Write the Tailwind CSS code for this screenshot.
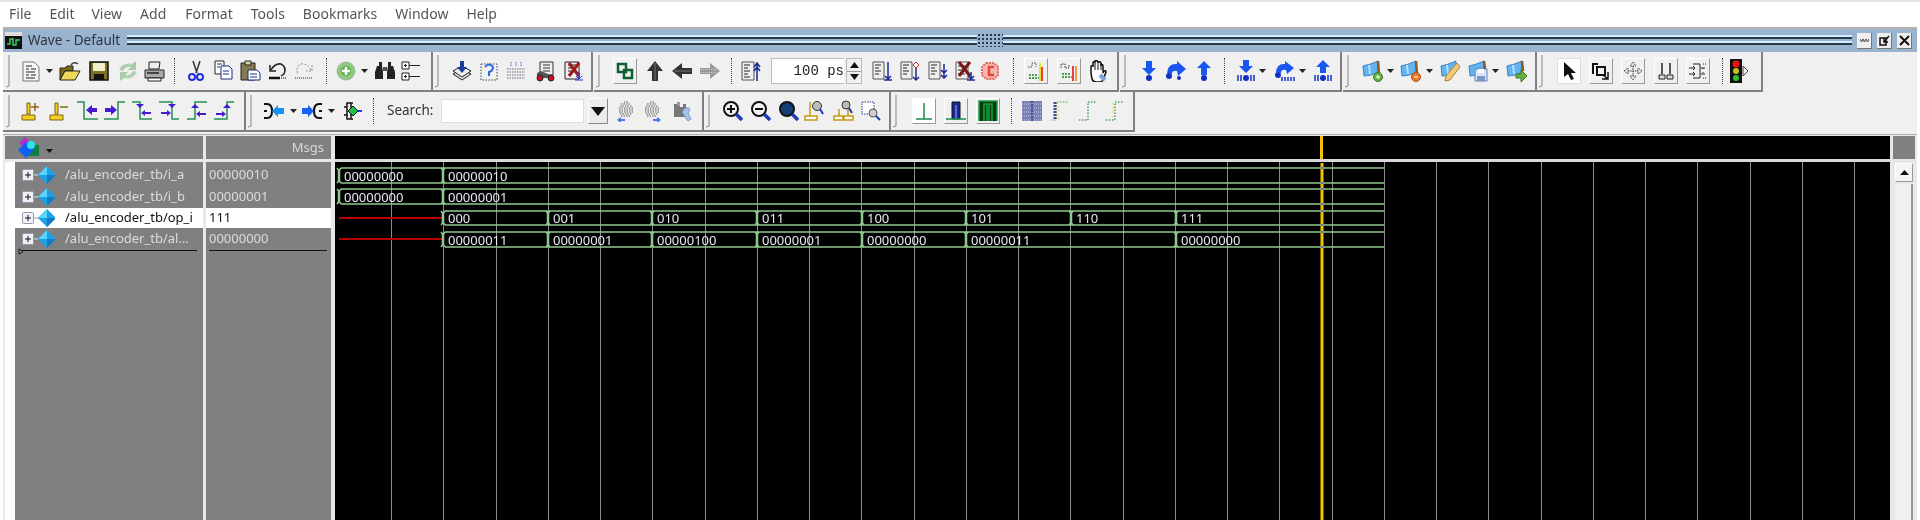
<!DOCTYPE html>
<html lang="en">
<head>
<meta charset="UTF-8">
<title>Wave - Default</title>
<script src="https://cdn.jsdelivr.net/npm/@tailwindcss/browser@4"></script>
</head>
<body class="bg-white">
<div class="w-[1920px] h-[520px] overflow-hidden flex flex-col font-['Noto_Sans',sans-serif] text-[#333] blur-[0.4px]">

  <!-- Menu bar -->
  <div class="h-[27px] shrink-0 flex items-center pl-[9px] pb-[3px] border-t-2 border-[#e4e4e4] text-[14px] text-[#555] bg-white">
    <span>File</span><span class="ml-[18px]">Edit</span><span class="ml-[17px]">View</span><span class="ml-[18px]">Add</span><span class="ml-[19px]">Format</span><span class="ml-[18px]">Tools</span><span class="ml-[18px]">Bookmarks</span><span class="ml-[18px]">Window</span><span class="ml-[18px]">Help</span>
  </div>

  <!-- Window -->
  <div class="flex-1 flex flex-col mx-[3px] border-t-2 border-[#b4b4b4] bg-[#f0f0f0] min-h-0">

    <!-- Title bar -->
    <div class="h-[23px] shrink-0 flex items-center bg-[#9ab4d0]">
      <svg width="17" height="17" viewBox="0 0 17 17" class="ml-[2px] shrink-0"><rect width="17" height="4" fill="#ddd"/><rect y="4" width="17" height="13" fill="#111"/><path d="M2 12h3V7h3v6h3V8h4" fill="none" stroke="#3ccf6a" stroke-width="1.5"/></svg>
      <span class="ml-[6px] w-[92px] text-[13.5px] leading-none text-[#2c3440] whitespace-nowrap">Wave - Default</span>
      <div class="relative ml-[7px] w-[1725px] h-[12px] flex flex-col">
        <div class="h-[2px] bg-[#d4eeff]"></div>
        <div class="h-[2px] bg-[#2b3a4a]"></div>
        <div class="h-[2px] mt-[2px] bg-[#d4eeff]"></div>
        <div class="h-[2px] bg-[#2b3a4a]"></div>
        <div class="absolute left-[850px] -top-[2px] w-[26px] h-[14px] bg-[#9ab4d0] bg-[radial-gradient(#2b3a4a_1px,transparent_1px)] bg-[length:4px_4px]"></div>
      </div>
      <span class="ml-[5px] w-[15px] h-[16px] flex items-center justify-center bg-[#eeeeee] border-r border-b border-[#777]"><svg width="9" height="3" viewBox="0 0 9 3"><path d="M0 0l1.5 3L3 0l1.5 3L6 0l1.5 3L9 0" fill="none" stroke="#444"/></svg></span>
      <span class="ml-[5px] w-[15px] h-[16px] flex items-center justify-center bg-[#eeeeee] border-r border-b border-[#777]"><svg width="11" height="11" viewBox="0 0 11 11"><path d="M1 3h6v7H1zM5 7l5-6M5 3v4h4" fill="none" stroke="#111" stroke-width="1.5"/></svg></span>
      <span class="ml-[5px] w-[15px] h-[16px] flex items-center justify-center bg-[#eeeeee] border-r border-b border-[#777]"><svg width="11" height="11" viewBox="0 0 11 11"><path d="M1 1l9 9M10 1l-9 9" stroke="#111" stroke-width="2"/></svg></span>
    </div>

    <!-- Toolbar row 1 -->
    <div class="h-[40px] shrink-0 flex">
      <div class="w-[430px] flex items-center border-r-2 border-b-2 border-[#808080]">
        <svg width="10" height="36" viewBox="0 0 10 36"><path d="M6 2v31l-3 1" fill="none" stroke="#888"/></svg>
        <svg width="22" height="22" viewBox="0 0 22 22" class="ml-[7px]"><path d="M3 2h11l5 5v14H3z" fill="#f6f6f6" stroke="#777"/><path d="M6 6h6M6 9h3M11 9h5M6 12h9M6 15h3M11 15h5M6 18h9" stroke="#222"/></svg>
        <svg width="7" height="4" viewBox="0 0 7 4" class="ml-[4px]"><path d="M0 0h7L3.5 4z" fill="#222"/></svg>
        <svg width="22" height="22" viewBox="0 0 22 22" class="ml-[6px]"><path d="M1 8h5l2-2h6v5H6L1 20z" fill="#7a6a10" stroke="#222"/><path d="M6 11h15l-5 9H1z" fill="#f2d858" stroke="#222"/><path d="M12 5q3-4 7-1" fill="none" stroke="#444" stroke-width="1.5"/></svg>
        <svg width="22" height="22" viewBox="0 0 22 22" class="ml-[7px]"><rect x="2" y="2" width="18" height="18" fill="#7d7020" stroke="#111" stroke-width="1.5"/><rect x="5" y="3" width="12" height="8" fill="#f2eec8"/><rect x="6" y="14" width="10" height="6" fill="#111"/></svg>
        <svg width="22" height="22" viewBox="0 0 22 22" class="ml-[7px]"><path d="M2 10q4-8 13-6l4-3v9h-8l3-3q-6-1-8 4zM20 12q-4 8-13 6l-4 3v-9h8l-3 3q6 1 8-4z" fill="#a8cba8"/><path d="M3 10q4-7 12-5M19 12q-4 7-12 5" fill="none" stroke="#e4f0e4" stroke-dasharray="1 1.5"/></svg>
        <svg width="22" height="22" viewBox="0 0 22 22" class="ml-[4px]"><path d="M6 2h11l-1 7H6z" fill="#eee" stroke="#222"/><path d="M2 10h19v8H2z" fill="#aaa" stroke="#222"/><path d="M5 18h13v3H5z" fill="#fff" stroke="#222"/><path d="M4 13h12" stroke="#222" stroke-width="1.5"/></svg>
        <span class="ml-[9px] w-px h-[26px] border-l border-dotted border-[#444]"></span>
        <svg width="22" height="22" viewBox="0 0 22 22" class="ml-[10px]"><path d="M8 1l4 12M15 1l-4 12" stroke="#333" stroke-width="1.5"/><circle cx="7" cy="17" r="3" fill="none" stroke="#2030d8" stroke-width="2"/><circle cx="15" cy="17" r="3" fill="none" stroke="#2030d8" stroke-width="2"/></svg>
        <svg width="22" height="22" viewBox="0 0 22 22" class="ml-[5px]"><path d="M3 1h9v13H3z" fill="#fff" stroke="#222"/><path d="M9 6h8l3 3v10H9z" fill="#fff" stroke="#1a2a80"/><path d="M5 4h5M5 7h3M11 11h6M11 14h6" stroke="#1a2a80"/></svg>
        <svg width="22" height="22" viewBox="0 0 22 22" class="ml-[5px]"><path d="M2 3h14v17H2z" fill="#857a50" stroke="#222"/><path d="M6 1h6v4H6z" fill="#d8d0a0" stroke="#222"/><path d="M9 10h9l3 3v7H9z" fill="#fff" stroke="#1a2a80"/><path d="M11 14h7M11 17h7" stroke="#1a2a80"/></svg>
        <svg width="22" height="22" viewBox="0 0 22 22" class="ml-[6px]"><path d="M3 5v6h6" fill="none" stroke="#222" stroke-width="1.5"/><path d="M4 10q4-7 10-6 6 3 3 10l-3 2" fill="none" stroke="#222" stroke-width="1.5"/><path d="M2 18h11" stroke="#111" stroke-width="2.5"/><path d="M14 18h6" stroke="#777" stroke-width="2" stroke-dasharray="1 1"/></svg>
        <svg width="22" height="22" viewBox="0 0 22 22" class="ml-[4px]"><path d="M19 5v6h-6M18 10q-4-7-10-6-6 3-3 10" fill="none" stroke="#888" stroke-dasharray="2 1.5"/><path d="M2 18h17" stroke="#888" stroke-width="2" stroke-dasharray="1 1"/></svg>
        <span class="ml-[11px] w-px h-[26px] border-l border-dotted border-[#444]"></span>
        <svg width="22" height="22" viewBox="0 0 22 22" class="ml-[8px]"><circle cx="11" cy="11" r="9" fill="#8ccb7c" stroke="#a0b8a0"/><circle cx="11" cy="11" r="5" fill="#5cae4c"/><path d="M11 7v8M7 11h8" stroke="#fff" stroke-width="2.5"/></svg>
        <svg width="7" height="4" viewBox="0 0 7 4" class="ml-[4px]"><path d="M0 0h7L3.5 4z" fill="#222"/></svg>
        <svg width="22" height="22" viewBox="0 0 22 22" class="ml-[6px]"><path d="M3 6h5l1 6v7H1v-7zM14 6h5l2 6v7h-8v-7z" fill="#222"/><path d="M9 7h4v4H9z" fill="#555"/><path d="M5 2h3v4H5zM14 2h3v4h-3z" fill="#222"/></svg>
        <svg width="22" height="22" viewBox="0 0 22 22" class="ml-[4px]"><path d="M2 2h7v7H2zM2 13h7v7H2z" fill="#fff" stroke="#222"/><path d="M4 5.5h3M5.5 4v3M4 16.5h3M5.500 15v3M9 5.5h11M9 16.5h11" stroke="#222"/></svg>
      </div>
      <div class="w-[160px] flex items-center border-r-2 border-b-2 border-[#808080]">
        <svg width="10" height="36" viewBox="0 0 10 36"><path d="M5 2v31l-3 1" fill="none" stroke="#888"/></svg>
        <svg width="22" height="22" viewBox="0 0 22 22" class="ml-[8px]"><path d="M11 9l9 5-9 6-9-6z" fill="#ddd" stroke="#222"/><path d="M11 6l9 5-9 6-9-6z" fill="#eee" stroke="#222"/><path d="M9 1h4v6h3l-5 6-5-6h3z" fill="#1a3c9c"/></svg>
        <svg width="22" height="22" viewBox="0 0 22 22" class="ml-[5px]"><path d="M3 4h16v16H3z" fill="none" stroke="#345" stroke-dasharray="1.5 1.5"/><path d="M7 7q4-5 8 0 0 4-4 5v4" fill="none" stroke="#2a6ad8" stroke-width="2"/></svg>
        <svg width="22" height="22" viewBox="0 0 22 22" class="ml-[5px]"><path d="M2 9h18M2 12h18M2 15h18M2 18h18" stroke="#667" stroke-dasharray="1.5 1"/><path d="M6 2v5M11 2v5M16 2v5" stroke="#2a6ad8" stroke-dasharray="1.5 1"/></svg>
        <svg width="22" height="22" viewBox="0 0 22 22" class="ml-[7px]"><path d="M6 2h13v13H6z" fill="#eee" stroke="#333"/><path d="M9 5h7M9 8h7M9 11h7" stroke="#333"/><path d="M3 13l4-2 9 4v3H3z" fill="#555"/><circle cx="6" cy="18" r="3" fill="#c81020" stroke="#222"/><circle cx="17" cy="18" r="3" fill="#c81020" stroke="#222"/></svg>
        <svg width="22" height="22" viewBox="0 0 22 22" class="ml-[6px]"><path d="M3 2h14v17H3z" fill="#eee" stroke="#222"/><path d="M6 5h8M6 8h8M6 11h8" stroke="#222"/><path d="M7 3l10 13M17 3L7 16" stroke="#a01818" stroke-width="3"/><path d="M17 12v7M14 16l3 3 3-3M13 20h8" fill="none" stroke="#2030d8"/></svg>
      </div>
      <div class="w-[525px] ml-[1px] flex items-center border-r-2 border-b-2 border-[#808080]">
        <svg width="10" height="36" viewBox="0 0 10 36"><path d="M5 2v31l-3 1" fill="none" stroke="#888"/></svg>
        <span class="ml-[9px] w-[24px] h-[26px] flex items-center justify-center bg-[#f0f0f0] border border-white border-r-[#999] border-b-[#999]"><svg width="18" height="18" viewBox="0 0 18 18"><path d="M2 2h8v8H2zM8 8h8v8H8z" fill="none" stroke="#0c6030" stroke-width="2.5"/></svg></span>
        <svg width="22" height="22" viewBox="0 0 22 22" class="ml-[7px]"><path d="M11 1l8 10h-5v10H8V11H3z" fill="#333"/><path d="M11 3v17" stroke="#777"/></svg>
        <svg width="22" height="22" viewBox="0 0 22 22" class="ml-[5px]"><path d="M1 11l10-8v5h10v6H11v5z" fill="#333"/><path d="M3 11h17" stroke="#777"/></svg>
        <svg width="22" height="22" viewBox="0 0 22 22" class="ml-[6px]"><path d="M21 11l-10-8v5H1v6h10v5z" fill="#999"/><path d="M2 9.5h16M2 12.5h16" stroke="#ccc" stroke-dasharray="1 1"/></svg>
        <span class="ml-[10px] w-px h-[26px] border-l border-dotted border-[#444]"></span>
        <svg width="22" height="22" viewBox="0 0 22 22" class="ml-[8px]"><path d="M2 2h12v18H2z" fill="#eee" stroke="#555"/><path d="M4 5h6M4 8h4M4 11h6M4 14h4M4 17h6" stroke="#222"/><path d="M17 4v17M14 7l3-4 3 4M14 11l3-4 3 4" fill="none" stroke="#1a2a90" stroke-width="1.5"/></svg>
        <span class="ml-[9px] w-[73px] h-[26px] flex items-center justify-end bg-white border border-[#bbb] border-r-0 font-['Liberation_Mono',monospace] text-[14px] text-[#222] whitespace-pre">100 ps</span>
        <span class="ml-[2px] w-[16px] h-[26px] flex flex-col border border-[#bbb]"><span class="flex-1 flex items-center justify-center"><svg width="9" height="6" viewBox="0 0 9 6"><path d="M0 6h9L4.500 0z" fill="#111"/></svg></span><span class="flex-1 flex items-center justify-center border-t border-[#999]"><svg width="9" height="6" viewBox="0 0 9 6"><path d="M0 0h9L4.500 6z" fill="#111"/></svg></span></span>
        <svg width="22" height="22" viewBox="0 0 22 22" class="ml-[9px]"><path d="M2 2h11v17H2z" fill="#eee" stroke="#555"/><path d="M4 5h6M4 8h4M4 11h6M4 14h4" stroke="#222"/><path d="M17 2v17M14 16l3 3 3-3M13 20h8" fill="none" stroke="#1a2a90" stroke-width="1.5"/></svg>
        <svg width="22" height="22" viewBox="0 0 22 22" class="ml-[6px]"><path d="M2 2h11v17H2z" fill="#eee" stroke="#555"/><path d="M4 5h6M4 8h4M4 11h6M4 14h4" stroke="#222"/><path d="M17 2l3 3-3 3-3-3z" fill="#fff" stroke="#d02020"/><path d="M17 8v12M14 17l3 3 3-3" fill="none" stroke="#1a2a90" stroke-width="1.5"/></svg>
        <svg width="22" height="22" viewBox="0 0 22 22" class="ml-[6px]"><path d="M2 2h11v17H2z" fill="#eee" stroke="#555"/><path d="M4 5h6M4 8h4M4 11h6M4 14h4" stroke="#222"/><path d="M17 4v14M14 10l3 3 3-3M14 15l3 3 3-3" fill="none" stroke="#1a2a90" stroke-width="1.5"/></svg>
        <svg width="22" height="22" viewBox="0 0 22 22" class="ml-[5px]"><path d="M2 2h12v17H2z" fill="#eee" stroke="#555"/><path d="M4 6h7M4 10h7M4 14h7" stroke="#222"/><path d="M5 2l11 14M16 2L5 16" stroke="#7a1818" stroke-width="3"/><path d="M17 12v7M14 16l3 3 3-3M13 20h8" fill="none" stroke="#1a2a90" stroke-width="1.5"/></svg>
        <svg width="22" height="22" viewBox="0 0 22 22" class="ml-[3px]"><path d="M7 3h8l4 4v8l-4 4H7l-4-4V7z" fill="#f4b8b0" stroke="#e86a60" stroke-width="2" stroke-dasharray="2 1"/><path d="M15 7h-5v8h5" fill="none" stroke="#e0483c" stroke-width="2.5"/></svg>
        <span class="ml-[12px] w-px h-[26px] border-l border-dotted border-[#444]"></span>
        <span class="ml-[10px] w-[24px] h-[26px] flex items-center justify-center bg-[#f0f0f0] border border-white border-r-[#999] border-b-[#999]"><svg width="20" height="20" viewBox="0 0 20 20"><path d="M2 6h4V2h4v4" fill="none" stroke="#555" stroke-dasharray="1.5 1"/><path d="M14 2v18" stroke="#e8e020" stroke-width="2"/><path d="M16 6v14" stroke="#e84040" stroke-width="2"/><path d="M3 17h10M3 14h9" stroke="#50a050" stroke-width="2" stroke-dasharray="2 1"/></svg></span>
        <span class="ml-[9px] w-[24px] h-[26px] flex items-center justify-center bg-[#f0f0f0] border border-white border-r-[#999] border-b-[#999]"><svg width="20" height="20" viewBox="0 0 20 20"><path d="M2 7V3h4v4h4V3" fill="none" stroke="#333" stroke-dasharray="1.5 1"/><path d="M14 5v15" stroke="#e84040" stroke-width="2"/><path d="M17 5v15" stroke="#e8a040" stroke-width="2"/><path d="M3 16h10M3 13h9" stroke="#50a050" stroke-width="2" stroke-dasharray="2 1"/></svg></span>
        <svg width="22" height="22" viewBox="0 0 22 22" class="ml-[6px]"><path d="M4 13V7q0-2 2-1V3q0-2 2-1l0-1q2-1 3 1 2-1 3 1v2q2-1 2 1v7l1-2q2-1 2 1l-3 8q-1 2-4 2H9q-3 0-4-3z" fill="#fff" stroke="#111" stroke-width="1.5"/><path d="M8 3v7M11 2v8M14 3v7" stroke="#111"/><path d="M13 15l5 5" stroke="#7ba0d8" stroke-width="4"/></svg>
      </div>
      <div class="w-[222px] ml-[1px] flex items-center border-r-2 border-b-2 border-[#808080]">
        <svg width="10" height="36" viewBox="0 0 10 36"><path d="M5 2v31l-3 1" fill="none" stroke="#888"/></svg>
        <svg width="22" height="22" viewBox="0 0 22 22" class="ml-[8px]"><path d="M8 1h6v7h4l-7 7-7-7h4z" fill="#1858f0"/><circle cx="11" cy="18" r="3" fill="#1030c0"/></svg>
        <svg width="22" height="22" viewBox="0 0 22 22" class="ml-[5px]"><path d="M2 13q1-10 10-9V1l9 8-8 7-1-5q-5-1-5 3z" fill="#1858f0"/><circle cx="4" cy="16" r="3" fill="#1030c0"/><circle cx="14" cy="18" r="2" fill="#1030c0"/></svg>
        <svg width="22" height="22" viewBox="0 0 22 22" class="ml-[6px]"><path d="M11 1l7 7h-4v7H8V8H4z" fill="#1858f0"/><circle cx="11" cy="18" r="3" fill="#1030c0"/></svg>
        <span class="ml-[9px] w-px h-[26px] border-l border-dotted border-[#444]"></span>
        <svg width="22" height="22" viewBox="0 0 22 22" class="ml-[10px]"><path d="M8 0h6v6h4l-7 7-7-7h4z" fill="#1858f0"/><path d="M3 15v6M6 15v6M16 15v6M19 15v6" stroke="#1030c0" stroke-width="1.5"/><circle cx="11" cy="18" r="3" fill="#1030c0"/></svg>
        <svg width="7" height="4" viewBox="0 0 7 4" class="ml-[2px]"><path d="M0 0h7L3.5 4z" fill="#222"/></svg>
        <svg width="22" height="22" viewBox="0 0 22 22" class="ml-[8px]"><path d="M2 12q1-9 9-8V1l9 7-7 6-1-4q-5-1-5 3z" fill="#1858f0"/><circle cx="4" cy="15" r="3" fill="#1030c0"/><path d="M8 17v4M11 17v4M14 17v4M17 17v4M20 17v4" stroke="#1030c0" stroke-width="1.5"/></svg>
        <svg width="7" height="4" viewBox="0 0 7 4" class="ml-[3px]"><path d="M0 0h7L3.5 4z" fill="#222"/></svg>
        <svg width="22" height="22" viewBox="0 0 22 22" class="ml-[6px]"><path d="M11 0l7 7h-4v6H8V7H4z" fill="#1858f0"/><path d="M3 15v6M6 15v6M16 15v6M19 15v6" stroke="#1030c0" stroke-width="1.5"/><circle cx="11" cy="18" r="3" fill="#1030c0"/></svg>
      </div>
      <div class="w-[194px] ml-[1px] flex items-center border-r-2 border-b-2 border-[#808080]">
        <svg width="10" height="36" viewBox="0 0 10 36"><path d="M5 2v31l-3 1" fill="none" stroke="#888"/></svg>
        <svg width="22" height="22" viewBox="0 0 22 22" class="ml-[9px]"><path d="M1 6q6-1 15-5l-1 12q-7 3-13 3z" fill="#62b4ee" stroke="#3a82c8"/><path d="M7 5l1 9" stroke="#b8e0ff" stroke-width="2"/><path d="M16 1l1 13" stroke="#8a5a20" stroke-width="2.5"/><circle cx="16" cy="17" r="4.5" fill="#68b040" stroke="#3a7a20"/><path d="M16 15v4M14 17h4" stroke="#fff"/></svg>
        <svg width="7" height="4" viewBox="0 0 7 4" class="ml-[3px]"><path d="M0 0h7L3.5 4z" fill="#222"/></svg>
        <svg width="22" height="22" viewBox="0 0 22 22" class="ml-[6px]"><path d="M1 6q6-1 15-5l-1 12q-7 3-13 3z" fill="#62b4ee" stroke="#3a82c8"/><path d="M7 5l1 9" stroke="#b8e0ff" stroke-width="2"/><path d="M16 1l1 13" stroke="#8a5a20" stroke-width="2.5"/><circle cx="16" cy="17" r="4.5" fill="#e87a30" stroke="#b05010"/><path d="M14 17h4" stroke="#fff"/></svg>
        <svg width="7" height="4" viewBox="0 0 7 4" class="ml-[4px]"><path d="M0 0h7L3.5 4z" fill="#222"/></svg>
        <svg width="22" height="22" viewBox="0 0 22 22" class="ml-[7px]"><path d="M1 6q6-1 15-5l-1 12q-7 3-13 3z" fill="#62b4ee" stroke="#3a82c8"/><path d="M7 5l1 9" stroke="#b8e0ff" stroke-width="2"/><path d="M17 3l3 4-10 13-5 1 1-5z" fill="#f0c878" stroke="#b08030"/></svg>
        <svg width="22" height="22" viewBox="0 0 22 22" class="ml-[6px]"><path d="M1 6q6-1 15-5l-1 12q-7 3-13 3z" fill="#62b4ee" stroke="#3a82c8"/><path d="M16 1l1 8" stroke="#8a5a20" stroke-width="2.5"/><path d="M7 9h12v12H7z" fill="#d8e4f8" stroke="#6080b8"/><path d="M10 9h6v4h-6z" fill="#fff"/><path d="M9 16h8v5H9z" fill="#7a98c8"/></svg>
        <svg width="7" height="4" viewBox="0 0 7 4" class="ml-[2px]"><path d="M0 0h7L3.5 4z" fill="#222"/></svg>
        <svg width="22" height="22" viewBox="0 0 22 22" class="ml-[7px]"><path d="M1 6q6-1 15-5l-1 12q-7 3-13 3z" fill="#62b4ee" stroke="#3a82c8"/><path d="M7 5l1 9" stroke="#b8e0ff" stroke-width="2"/><path d="M16 1l1 10" stroke="#8a5a20" stroke-width="2.5"/><path d="M10 14h5v-4l6 6-6 6v-4h-5z" fill="#68b040" stroke="#3a7a20"/></svg>
      </div>
      <div class="w-[226px] flex items-center border-r-2 border-b-2 border-[#808080]">
        <svg width="10" height="36" viewBox="0 0 10 36"><path d="M5 2v31l-3 1" fill="none" stroke="#888"/></svg>
        <span class="ml-[10px] w-[24px] h-[26px] flex items-center justify-center bg-white border border-[#ddd]"><svg width="16" height="20" viewBox="0 0 16 20"><path d="M3 1v15l4-3 3 6 3-1-3-6h5z" fill="#111"/></svg></span>
        <span class="ml-[8px] w-[24px] h-[26px] flex items-center justify-center bg-[#f0f0f0] border border-white border-r-[#999] border-b-[#999]"><svg width="18" height="18" viewBox="0 0 18 18"><path d="M6 2H1v10M5 5h8v8H5z" fill="none" stroke="#111" stroke-width="2"/><path d="M11 13l5 4M16 10v7h-6" fill="none" stroke="#111" stroke-width="1.5"/></svg></span>
        <span class="ml-[8px] w-[24px] h-[26px] flex items-center justify-center bg-[#f0f0f0] border border-white border-r-[#999] border-b-[#999]"><svg width="20" height="20" viewBox="0 0 20 20"><path d="M10 1l3 4H7zM10 19l3-4H7zM1 10l4-3v6zM19 10l-4-3v6zM10 5v10M5 10h10" fill="#eee" stroke="#444" stroke-dasharray="1.5 .8"/></svg></span>
        <span class="ml-[9px] w-[24px] h-[26px] flex items-center justify-center bg-[#f0f0f0] border border-white border-r-[#999] border-b-[#999]"><svg width="18" height="20" viewBox="0 0 18 20"><path d="M5 2v11M13 2v11" stroke="#222" stroke-width="1.5"/><path d="M2 14h6v4H2zM10 14h6v4h-6z" fill="#ddd" stroke="#222"/></svg></span>
        <span class="ml-[8px] w-[24px] h-[26px] flex items-center justify-center bg-[#f0f0f0] border border-white border-r-[#999] border-b-[#999]"><svg width="20" height="20" viewBox="0 0 20 20"><path d="M5 3h7v14H5" fill="none" stroke="#222"/><path d="M15 3h4M15 17h4M15 7v1M15 11v1" stroke="#222" stroke-dasharray="1 1"/><path d="M1 7h6M5 5l2 2-2 2M1 13h6M5 11l2 2-2 2M13 7h4M13 13h4" fill="none" stroke="#222"/></svg></span>
        <span class="ml-[12px] w-px h-[26px] border-l border-dotted border-[#444]"></span>
        <svg width="22" height="24" viewBox="0 0 22 24" class="ml-[5px]"><rect x="2" y="0" width="12" height="24" fill="#111"/><circle cx="8" cy="5" r="3.500" fill="#f01010"/><circle cx="8" cy="12" r="3" fill="#c8c020"/><circle cx="8" cy="19" r="3" fill="#30c030"/><path d="M15 7l5 5-5 5z" fill="#f0f0f0" stroke="#444"/></svg>
      </div>
    </div>

    <!-- Toolbar row 2 -->
    <div class="h-[40px] shrink-0 flex">
      <div class="w-[243px] flex items-center border-r-2 border-b-2 border-[#808080]">
        <svg width="10" height="36" viewBox="0 0 10 36"><path d="M6 2v31l-3 1" fill="none" stroke="#888"/></svg>
        <svg width="22" height="22" viewBox="0 0 22 22" class="ml-[7px]"><path d="M7 3h3v11H7zM2 15h13v5H2z" fill="#f6cf24" stroke="#7a6410"/><path d="M15 3v8M11 7h8" stroke="#8a6a10" stroke-width="1.5"/></svg>
        <svg width="22" height="22" viewBox="0 0 22 22" class="ml-[6px]"><path d="M7 3h3v11H7zM2 15h13v5H2z" fill="#f6cf24" stroke="#7a6410"/><path d="M12 7h8" stroke="#8a6a10" stroke-width="1.5"/></svg>
        <svg width="22" height="22" viewBox="0 0 22 22" class="ml-[7px]"><path d="M0 2h7v17h14" fill="none" stroke="#249050" stroke-width="1.5"/><path d="M9 10l6-5v3h5v4h-5v3z" fill="#4a18d0"/></svg>
        <svg width="22" height="22" viewBox="0 0 22 22" class="ml-[4px]"><path d="M1 19h14V2h7" fill="none" stroke="#249050" stroke-width="1.5"/><path d="M14 10L8 5v3H2v4h6v3z" fill="#4a18d0"/></svg>
        <svg width="22" height="22" viewBox="0 0 22 22" class="ml-[6px]"><path d="M1 2h8v17h12" fill="none" stroke="#249050" stroke-width="1.5"/><path d="M5 4h8l-4 4zM10 13l4-3v2h6v2h-6v2z" fill="#4a18d0"/></svg>
        <svg width="22" height="22" viewBox="0 0 22 22" class="ml-[5px]"><path d="M1 2h13v17h7" fill="none" stroke="#249050" stroke-width="1.5"/><path d="M10 4h8l-4 4zM13 13l-4-3v2H3v2h6v2z" fill="#4a18d0"/></svg>
        <svg width="22" height="22" viewBox="0 0 22 22" class="ml-[6px]"><path d="M1 19h8V2h12" fill="none" stroke="#249050" stroke-width="1.5"/><path d="M5 8h8L9 4zM10 14l4-3v2h6v2h-6v2z" fill="#4a18d0"/></svg>
        <svg width="22" height="22" viewBox="0 0 22 22" class="ml-[5px]"><path d="M1 19h13V2h7" fill="none" stroke="#249050" stroke-width="1.5"/><path d="M10 8h8l-4-4zM13 14l-4-3v2H3v2h6v2z" fill="#4a18d0"/></svg>
      </div>
      <div class="w-[458px] flex items-center border-r-2 border-b-2 border-[#808080]">
        <svg width="10" height="36" viewBox="0 0 10 36"><path d="M5 2v31l-3 1" fill="none" stroke="#888"/></svg>
        <svg width="22" height="22" viewBox="0 0 22 22" class="ml-[7px]"><path d="M1 4h3q5 0 5 7t-5 7H1M4 11H1" fill="none" stroke="#111" stroke-width="2"/><path d="M9 11l6-6v3h6v6h-6v3z" fill="#1890f8"/></svg>
        <svg width="7" height="4" viewBox="0 0 7 4" class="ml-[5px]"><path d="M0 0h7L3.5 4z" fill="#222"/></svg>
        <svg width="22" height="22" viewBox="0 0 22 22" class="ml-[4px]"><path d="M21 4h-3q-5 0-5 7t5 7h3M18 11h3" fill="none" stroke="#111" stroke-width="2"/><path d="M13 11L7 5v3H1v6h6v3z" fill="#1860f8"/></svg>
        <svg width="7" height="4" viewBox="0 0 7 4" class="ml-[5px]"><path d="M0 0h7L3.5 4z" fill="#222"/></svg>
        <svg width="22" height="22" viewBox="0 0 22 22" class="ml-[7px]"><path d="M6 3h5M6 19h5M2 7h3M2 15h3M5 3h4v16H5z" fill="none" stroke="#111" stroke-width="1.5"/><path d="M11 6l5 5-5 5-5-5z" fill="#20c040" stroke="#111"/><path d="M16 11h4" stroke="#1840e0" stroke-width="2"/></svg>
        <span class="ml-[9px] w-px h-[26px] border-l border-dotted border-[#444]"></span>
        <span class="ml-[13px] w-[45px] text-[13.5px] leading-none text-[#333] whitespace-nowrap">Search:</span>
        <span class="ml-[9px] w-[143px] h-[24px] bg-white border border-[#ddd]"></span>
        <span class="ml-[4px] w-[20px] h-[26px] flex items-center justify-center bg-[#ececec] border border-white border-r-[#888] border-b-[#888]"><svg width="14" height="9" viewBox="0 0 14 9"><path d="M0 0h14L7 9z" fill="#111"/></svg></span>
        <svg width="22" height="22" viewBox="0 0 22 22" class="ml-[7px]"><path d="M9 2h4M6 4h10M5 6h12M4 8h14M4 10h14M4 12h14M5 14h12M6 16h10" stroke="#8a8a8a" stroke-width="1.5" stroke-dasharray="1.500 1"/><path d="M2 20l4-3v2h4v2H6v2z" fill="#4a78e8"/></svg>
        <svg width="22" height="22" viewBox="0 0 22 22" class="ml-[4px]"><path d="M9 2h4M6 4h10M5 6h12M4 8h14M4 10h14M4 12h14M5 14h12M6 16h10" stroke="#8a8a8a" stroke-width="1.5" stroke-dasharray="1.500 1"/><path d="M20 20l-4-3v2h-4v2h4v2z" fill="#4a78e8"/></svg>
        <svg width="22" height="22" viewBox="0 0 22 22" class="ml-[7px]"><path d="M4 4h6v3h3V4h3v13H4z" fill="#777"/><path d="M7 2h3v4H7z" fill="#999"/><path d="M14 9q5-3 6 1l-2 3 3 6-3 2-4-6q-3-3 0-6z" fill="#a8c4ea" stroke="#7a98c8"/></svg>
      </div>
      <div class="w-[187px] flex items-center border-r-2 border-b-2 border-[#808080]">
        <svg width="10" height="36" viewBox="0 0 10 36"><path d="M5 2v31l-3 1" fill="none" stroke="#888"/></svg>
        <svg width="22" height="22" viewBox="0 0 22 22" class="ml-[8px]"><circle cx="9" cy="9" r="7" fill="#f4f4f4" stroke="#111" stroke-width="2"/><path d="M9 5v8M5 9h8" stroke="#111" stroke-width="2"/><path d="M14 14l6 6" stroke="#1a3cb0" stroke-width="3.5"/></svg>
        <svg width="22" height="22" viewBox="0 0 22 22" class="ml-[6px]"><circle cx="9" cy="9" r="7" fill="#f4f4f4" stroke="#111" stroke-width="2"/><path d="M5 9h8" stroke="#111" stroke-width="2"/><path d="M14 14l6 6" stroke="#1a3cb0" stroke-width="3.5"/></svg>
        <svg width="22" height="22" viewBox="0 0 22 22" class="ml-[6px]"><circle cx="9" cy="9" r="7" fill="#143e78" stroke="#111" stroke-width="2"/><path d="M14 14l6 6" stroke="#1a3cb0" stroke-width="3.5"/></svg>
        <svg width="22" height="22" viewBox="0 0 22 22" class="ml-[4px]"><path d="M6 2v14" stroke="#c89810" stroke-width="1.5"/><path d="M1 16h12v4H1z" fill="#fff" stroke="#c89810" stroke-width="1.5"/><circle cx="13" cy="6" r="4.5" fill="#bbb" stroke="#333"/><path d="M16 9l3 5" stroke="#1a3cb0" stroke-width="2"/></svg>
        <svg width="22" height="22" viewBox="0 0 22 22" class="ml-[7px]"><path d="M6 9v7M15 9v7" stroke="#c89810" stroke-width="1.5"/><path d="M1 16h9v4H1zM11 16h9v4h-9z" fill="#fff" stroke="#c89810" stroke-width="1.5"/><circle cx="13" cy="5" r="4" fill="#bbb" stroke="#333"/><path d="M16 8l3 5" stroke="#1a3cb0" stroke-width="2"/></svg>
        <svg width="22" height="22" viewBox="0 0 22 22" class="ml-[5px]"><path d="M2 2h12v12H2z" fill="#fff" stroke="#2a3a90" stroke-dasharray="1.5 1"/><circle cx="13" cy="13" r="4" fill="#ccc" stroke="#555"/><path d="M16 16l4 4" stroke="#1a3cb0" stroke-width="2"/></svg>
      </div>
      <div class="w-[244px] flex items-center border-r-2 border-b-2 border-[#808080]">
        <svg width="10" height="36" viewBox="0 0 10 36"><path d="M5 2v31l-3 1" fill="none" stroke="#888"/></svg>
        <span class="ml-[11px] w-[24px] h-[26px] flex items-center justify-center bg-white border border-white border-r-[#999] border-b-[#999]"><svg width="20" height="22" viewBox="0 0 20 22"><path d="M10 3v16M2 19h16" stroke="#18904a" stroke-width="1.5"/></svg></span>
        <span class="ml-[8px] w-[24px] h-[26px] flex items-center justify-center bg-[#f0f0f0] border border-white border-r-[#999] border-b-[#999]"><svg width="20" height="22" viewBox="0 0 20 22"><path d="M6 2h8v17H6z" fill="#1a2a90" stroke="#111"/><path d="M9 5h2v14H9z" fill="#5a6ad0"/><path d="M0 19h20" stroke="#18904a" stroke-width="1.5"/></svg></span>
        <span class="ml-[8px] w-[24px] h-[26px] flex items-center justify-center bg-[#f0f0f0] border border-white border-r-[#999] border-b-[#999]"><svg width="20" height="22" viewBox="0 0 20 22"><path d="M1 1h18v20H1z" fill="#063c10"/><path d="M1 21V1h18v20M6 21V4h3v17M11 21V4h3v17" fill="none" stroke="#18a040" stroke-width="1.5"/></svg></span>
        <span class="ml-[11px] w-px h-[26px] border-l border-dotted border-[#444]"></span>
        <svg width="22" height="22" viewBox="0 0 22 22" class="ml-[9px]"><rect x="1" y="1" width="20" height="20" fill="#7a80b8"/><path d="M1 4h20M1 8h20M1 12h20M1 16h20M1 20h20" stroke="#c8cce4" stroke-dasharray="1 1"/><path d="M11 1v20" stroke="#3a5098" stroke-width="2" stroke-dasharray="2 1"/></svg>
        <svg width="22" height="22" viewBox="0 0 22 22" class="ml-[6px]"><path d="M2 20h5V2h12" fill="none" stroke="#50a060" stroke-dasharray="1.5 1.5"/><path d="M6 2v18" stroke="#3a4a98" stroke-width="3" stroke-dasharray="2 1"/><path d="M9 2v18" stroke="#e0d830" stroke-dasharray="2 2"/></svg>
        <svg width="22" height="22" viewBox="0 0 22 22" class="ml-[6px]"><path d="M2 20h9V2h9" fill="none" stroke="#50a060" stroke-width="1.5" stroke-dasharray="1.5 1.5"/></svg>
        <svg width="22" height="22" viewBox="0 0 22 22" class="ml-[5px]"><path d="M2 20h9V2h9" fill="none" stroke="#50a060" stroke-width="1.5" stroke-dasharray="1.5 1.5"/><path d="M9 3v16" stroke="#e0d830" stroke-dasharray="2 2"/></svg>
      </div>
    </div>

    <div class="h-[3px] shrink-0 border-b border-[#b0b0b0]"></div>

    <!-- Wave panel -->
    <div class="flex-1 flex min-h-0 pl-[2px] pr-[2px] pt-[1px] bg-[#e8e8e8] text-[13px]">

      <!-- Signal names -->
      <div class="w-[198px] flex flex-col">
        <div class="h-[23px] shrink-0 bg-[#808080] flex items-center pl-[12px]">
          <svg width="24" height="21" viewBox="0 0 24 21"><path d="M2 6l6-6 6 6-6 6z" fill="#b030c8"/><rect x="11" y="8" width="11" height="11" fill="#108040"/><path d="M9 5l8 8-8 8-8-8z" fill="#1060f0"/><circle cx="14" cy="8" r="4" fill="#30e0f0"/></svg>
          <svg width="7" height="4" viewBox="0 0 7 4" class="ml-[5px] mt-[6px]"><path d="M0 0h7L3.5 4z" fill="#111"/></svg>
        </div>
        <div class="flex-1 mt-[3px] flex bg-white">
          <div class="w-[10px] shrink-0"></div>
          <div class="flex-1 bg-[#808080] pt-[2px] text-[#dcdcdc] relative">
            <div class="h-[22px] flex items-center pl-[7px]">
              <svg width="33" height="20" viewBox="0 0 33 20" class="shrink-0"><rect x="0.5" y="4.5" width="11" height="11" rx="1" fill="#eef0f8" stroke="#99a"/><path d="M3 10h6M6 7v6" stroke="#111"/><path d="M12 10h6" stroke="#ddd"/><path d="M25 1l9 9-9 9-9-9z" fill="#1fa0e4"/><path d="M25 1l-9 9h9z" fill="#58d4ff"/><path d="M25 19l9-9h-9z" fill="#157ac4"/></svg>
              <span class="ml-[10px] whitespace-nowrap">/alu_encoder_tb/i_a</span>
            </div>
            <div class="h-[22px] flex items-center pl-[7px]">
              <svg width="33" height="20" viewBox="0 0 33 20" class="shrink-0"><rect x="0.5" y="4.5" width="11" height="11" rx="1" fill="#eef0f8" stroke="#99a"/><path d="M3 10h6M6 7v6" stroke="#111"/><path d="M12 10h6" stroke="#ddd"/><path d="M25 1l9 9-9 9-9-9z" fill="#1fa0e4"/><path d="M25 1l-9 9h9z" fill="#58d4ff"/><path d="M25 19l9-9h-9z" fill="#157ac4"/></svg>
              <span class="ml-[10px] whitespace-nowrap">/alu_encoder_tb/i_b</span>
            </div>
            <div class="h-[20px] flex items-center pl-[7px] bg-white text-[#111]">
              <svg width="33" height="20" viewBox="0 0 33 20" class="shrink-0"><rect x="0.5" y="4.5" width="11" height="11" rx="1" fill="#eef0f8" stroke="#99a"/><path d="M3 10h6M6 7v6" stroke="#111"/><path d="M12 10h6" stroke="#999"/><path d="M25 1l9 9-9 9-9-9z" fill="#1fa0e4"/><path d="M25 1l-9 9h9z" fill="#58d4ff"/><path d="M25 19l9-9h-9z" fill="#157ac4"/></svg>
              <span class="ml-[10px] whitespace-nowrap">/alu_encoder_tb/op_i</span>
            </div>
            <div class="h-[21px] flex items-center pl-[7px]">
              <svg width="33" height="20" viewBox="0 0 33 20" class="shrink-0"><rect x="0.5" y="4.5" width="11" height="11" rx="1" fill="#eef0f8" stroke="#99a"/><path d="M3 10h6M6 7v6" stroke="#111"/><path d="M12 10h6" stroke="#ddd"/><path d="M25 1l9 9-9 9-9-9z" fill="#1fa0e4"/><path d="M25 1l-9 9h9z" fill="#58d4ff"/><path d="M25 19l9-9h-9z" fill="#157ac4"/></svg>
              <span class="ml-[10px] whitespace-nowrap">/alu_encoder_tb/al...</span>
            </div>
            <div class="h-px mt-[1px] ml-[5px] mr-[6px] bg-[#111]"></div>
            <svg width="6" height="7" viewBox="0 0 6 7" class="absolute left-[3px] top-[86px]"><path d="M1 1l4 2.5L1 6z" fill="#999" stroke="#111"/></svg>
          </div>
        </div>
      </div>

      <!-- Values -->
      <div class="w-[125px] ml-[3px] flex flex-col">
        <div class="h-[23px] shrink-0 bg-[#808080] flex items-center justify-end pr-[7px] text-[#d8d8d8]">Msgs</div>
        <div class="flex-1 mt-[3px] bg-[#808080] pt-[2px] text-[#dcdcdc]">
          <div class="h-[22px] flex items-center pl-[3px]">00000010</div>
          <div class="h-[22px] flex items-center pl-[3px]">00000001</div>
          <div class="h-[20px] flex items-center pl-[3px] bg-white text-[#111]">111</div>
          <div class="h-[21px] flex items-center pl-[3px]">00000000</div>
          <div class="h-px mt-[1px] ml-[3px] mr-[4px] bg-[#111]"></div>
        </div>
      </div>

      <!-- Wave display -->
      <div class="w-[1555px] ml-[4px] flex flex-col">
        <div class="h-[23px] shrink-0 bg-black pl-[985px]"><div class="w-[3px] h-full bg-[#f2c400]"></div></div>
        <div class="h-[3px] shrink-0 bg-[#d8d8d8]"></div>
        <svg id="wave" class="flex-1 w-[1555px] bg-black" viewBox="335 162 1555 358" width="1555" height="358"></svg>
      </div>

      <!-- Scrollbar -->
      <div class="w-[22px] ml-[3px] flex flex-col">
        <div class="h-[23px] shrink-0 bg-[#808080]"></div>
        <div class="mt-[4px] mx-[2px] h-[19px] flex items-center justify-center bg-[#f4f4f4] border border-white border-r-[#999] border-b-[#999]"><svg width="9" height="5" viewBox="0 0 9 5"><path d="M0 5h9L4.5 0z" fill="#111"/></svg></div>
        <div class="flex-1 mt-[2px] mx-[2px] bg-[#f0f0f0] border-r-2 border-[#999]"></div>
      </div>
    </div>
  </div>
</div>

<script>
  // Waveform data, in page pixels (the svg viewBox uses the same coordinates)
  const NS = 'http://www.w3.org/2000/svg';
  const wave = document.getElementById('wave');
  const END = 1384, CURSOR = 1322;

  function add(tag, attrs, text) {
    const el = document.createElementNS(NS, tag);
    Object.keys(attrs).forEach(k => el.setAttribute(k, attrs[k]));
    if (text) el.textContent = text;
    wave.appendChild(el);
  }

  // Vertical grid
  for (let x = 391; x < 1890; x += 52.25) {
    const gx = Math.round(x) + 0.5;
    add('path', { d: `M${gx} 162V520`, stroke: '#8c8c8c', 'stroke-width': 1 });
  }

  // Cursor sits under the buses
  add('rect', { x: CURSOR - 1.5, y: 163, width: 3, height: 357, fill: '#f2c400' });

  const rows = [
    { top: 168, bottom: 183, from: 339, segs: [[339, '00000000'], [443, '00000010']] },
    { top: 189, bottom: 204, from: 339, segs: [[339, '00000000'], [443, '00000001']] },
    { top: 211, bottom: 225, from: 443, red: 218, segs: [[443, '000'], [548, '001'], [652, '010'], [757, '011'], [862, '100'], [966, '101'], [1071, '110'], [1176, '111']] },
    { top: 232, bottom: 247, from: 443, red: 239, segs: [[443, '00000011'], [548, '00000001'], [652, '00000100'], [757, '00000001'], [862, '00000000'], [966, '00000011'], [1176, '00000000']] },
  ];

  rows.forEach(row => {
    if (row.red) add('path', { d: `M339 ${row.red}H${row.from}`, stroke: '#b80000', 'stroke-width': 2 });
    let d = `M${row.from + 2} ${row.top}H${END}M${row.from + 2} ${row.bottom}H${END}`;
    row.segs.forEach(seg => {
      const x = seg[0];
      d += `M${x - 2} ${row.top}l1.5 2v${row.bottom - row.top - 4}l-1.5 2M${x + 2} ${row.top}l-1.5 2v${row.bottom - row.top - 4}l1.5 2`;
      add('text', { x: x + 5, y: (row.top + row.bottom) / 2 + 5, fill: '#e6e9f2', 'font-size': 13 }, seg[1]);
    });
    add('path', { d: d, fill: 'none', stroke: '#8fc98f', 'stroke-width': 1.5 });
    add('rect', { x: CURSOR - 1, y: row.top - 1, width: 2, height: 2, fill: '#6a6ab0' });
    add('rect', { x: CURSOR - 1, y: row.bottom - 1, width: 2, height: 2, fill: '#6a6ab0' });
  });
</script>
</body>
</html>
